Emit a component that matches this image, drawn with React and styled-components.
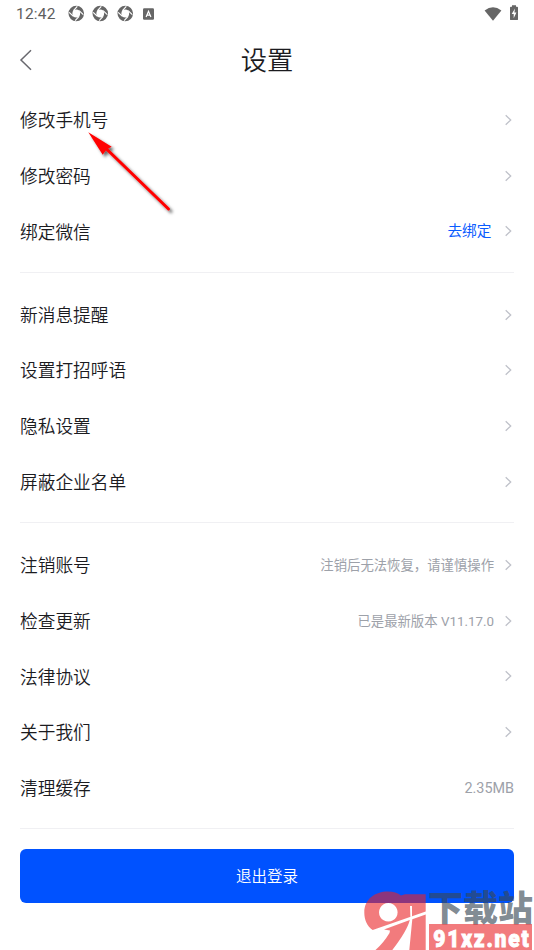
import React from "react";
import styled, { createGlobalStyle } from "styled-components";

const Global = createGlobalStyle`
  * { box-sizing: border-box; }
  html, body { margin: 0; padding: 0; background: #fff; }
  body { font-family: Roboto, "Noto Sans CJK SC", sans-serif; color: #1b1b1f; overflow: hidden; }
`;

const Screen = styled.main`
  position: relative;
  width: 534px;
  height: 950px;
  overflow: hidden;
  background: #fff;
`;

const StatusBar = styled.div`
  display: flex;
  align-items: center;
  justify-content: space-between;
  height: 27px;
  padding: 0 15px 0 16px;
  color: #5e5e5e;
`;

const StatusGroup = styled.div`
  display: flex;
  align-items: center;
  gap: ${(p) => p.$gap}px;
`;

const Clock = styled.span`
  width: 43.5px;
  font-size: 15.5px;
  font-weight: 400;
  line-height: 27px;
  letter-spacing: 0.2px;
  padding-top: 1px;
`;

const Header = styled.header`
  display: grid;
  grid-template-columns: 60px 1fr 60px;
  align-items: center;
  height: 65px;
  padding-left: 19px;
  padding-right: 19px;
`;

const BackButton = styled.button`
  display: flex;
  padding: 0;
  border: 0;
  background: none;
`;

const Title = styled.h1`
  margin: 0;
  padding-top: 2px;
  font-size: 26.3px;
  font-weight: 350;
  line-height: 40px;
  text-align: center;
`;

const Section = styled.section`
  margin: 0 20px;
  padding-bottom: 12.8px;
  margin-bottom: 13.8px;
  border-bottom: 1px solid #f0f0f3;
`;

const Row = styled.div`
  display: flex;
  align-items: center;
  height: 55.7px;
`;

const Label = styled.span`
  flex: 1;
  padding-top: 2.6px;
  font-size: 17.7px;
  font-weight: 350;
  line-height: 26px;
`;

const Hint = styled.span`
  padding-top: ${(p) => (p.$link ? 0.5 : 2)}px;
  font-size: ${(p) => (p.$link ? 14.7 : p.$last ? 14.4 : 13.36)}px;
  font-weight: 400;
  line-height: 22px;
  color: ${(p) => (p.$link ? "#0a5cff" : "#9da1a9")};
  margin-right: ${(p) => (p.$link ? 12.5 : p.$last ? 0 : 10)}px;
`;

const LogoutButton = styled.button`
  display: block;
  width: 494px;
  height: 53.5px;
  padding: 0 0 1px;
  border: 0;
  border-radius: 6px;
  background: #0052ff;
  color: #fff;
  font-family: inherit;
  font-size: 15.5px;
  font-weight: 350;
`;

const Actions = styled.div`
  padding: 6px 20px 0;
`;

const ArrowOverlay = styled.svg`
  position: absolute;
  left: 80px;
  top: 122px;
`;

const Watermark = styled.div`
  position: absolute;
  left: 363px;
  top: 889px;
  width: 171px;
  height: 61px;
  display: flex;
  gap: 2px;
`;

const WatermarkText = styled.div`
  display: flex;
  flex-direction: column;
  width: 106px;
`;

const SiteName = styled.span`
  height: 35px;
  font-family: "Noto Sans CJK SC", sans-serif;
  font-size: 35px;
  font-weight: 900;
  line-height: 34px;
  white-space: nowrap;
  color: rgba(55, 72, 84, 0.65);
`;

const SiteBanner = styled.div`
  width: 103px;
  height: 26px;
  margin-left: 1px;
  background: rgba(233, 35, 38, 0.6);
`;

const sections = [
  [{ label: "修改手机号" }, { label: "修改密码" }, { label: "绑定微信", hint: "去绑定", link: true }],
  [{ label: "新消息提醒" }, { label: "设置打招呼语" }, { label: "隐私设置" }, { label: "屏蔽企业名单" }],
  [
    { label: "注销账号", hint: "注销后无法恢复，请谨慎操作" },
    { label: "检查更新", hint: "已是最新版本 V11.17.0" },
    { label: "法律协议" },
    { label: "关于我们" },
    { label: "清理缓存", hint: "2.35MB", last: true },
  ],
];

const Chevron = () => (
  <svg width="10" height="12" viewBox="0 0 10 12" fill="none" stroke="#bfc1c9" strokeWidth="1.3">
    <path d="M1.7 1.2 6.7 6 1.7 10.8" />
  </svg>
);

const Aperture = () => (
  <svg width="16.5" height="17" viewBox="0 0 17 17">
    <circle cx="8.5" cy="8.5" r="6" fill="none" stroke="#666" strokeWidth="4" />
    <path
      d="M5.6 5.6 9.6 1.2M11.4 5.6 15.8 9.6M11.4 11.4 7.4 15.8M5.6 11.4 1.2 7.4"
      stroke="#fff"
      strokeWidth="1.2"
      fill="none"
    />
  </svg>
);

const BadgeA = () => (
  <svg width="13" height="12" viewBox="0 0 13 12">
    <rect x="2" y=".3" width="11" height="11.4" rx="1.2" fill="#666" />
    <path d="M5.1 9 7.5 3.2 9.9 9M6 7.2h3" stroke="#fff" strokeWidth="1.2" fill="none" />
  </svg>
);

const Wifi = () => (
  <svg width="18" height="14" viewBox="0 0 18 14">
    <path d="M.6 3.5Q9-3 17.4 3.5L9 13.7Z" fill="#666" />
  </svg>
);

const Battery = () => (
  <svg width="10" height="17" viewBox="0 0 10 17">
    <path d="M3 .3h4v1.4h1.1q.9 0 .9.9v11.6q0 .9-.9.9H1.9q-.9 0-.9-.9V2.6q0-.9.9-.9H3Z" fill="#666" />
    <path d="M6 3.5 2.7 9.1h2v4.1L7.4 7.6h-2Z" fill="#fff" />
  </svg>
);

const NinetyOneLogo = () => (
  <svg width="63" height="61" viewBox="0 0 63 61">
    <g fill="rgba(233,35,38,.6)">
      <path
        fillRule="evenodd"
        d="M9.7 41C4 37 1.3 31 1.3 23.5 1.3 10 12 2.5 25 2.5q8 0 13 4l4-1.2h20.7v17.2ZM25.3 14a9.3 9.3 0 1 0 .01 0ZM47 17l.4 10.7 1.6-.5V17Z"
      />
      <path d="M21 40.5 46.8 31Q44 42 29.3 61H12.5q8-7 14-17L27 41.5ZM49.3 30.2 62.7 25.5V61H46.3Z" />
    </g>
  </svg>
);

export default function App() {
  return (
    <Screen>
      <Global />
      <StatusBar>
        <StatusGroup $gap={8}>
          <Clock>12:42</Clock>
          <Aperture />
          <Aperture />
          <Aperture />
          <BadgeA />
        </StatusGroup>
        <StatusGroup $gap={7}>
          <Wifi />
          <Battery />
        </StatusGroup>
      </StatusBar>
      <Header>
        <BackButton aria-label="返回">
          <svg width="14" height="22" viewBox="0 0 14 22" fill="none" stroke="#68686e" strokeWidth="1.5">
            <path d="M12 1.3 2 11l10 9.7" />
          </svg>
        </BackButton>
        <Title>设置</Title>
      </Header>
      {sections.map((rows, i) => (
        <Section key={i}>
          {rows.map((row) => (
            <Row key={row.label}>
              <Label>{row.label}</Label>
              {row.hint && <Hint $link={row.link} $last={row.last}>{row.hint}</Hint>}
              {!row.last && <Chevron />}
            </Row>
          ))}
        </Section>
      ))}
      <Actions>
        <LogoutButton>退出登录</LogoutButton>
      </Actions>
      <ArrowOverlay width="105" height="102" viewBox="0 0 105 102">
        <defs>
          <filter id="shadow" x="-20%" y="-20%" width="150%" height="150%">
            <feDropShadow dx="2.5" dy="2.5" stdDeviation="1.8" floodColor="#000" floodOpacity=".6" />
          </filter>
        </defs>
        <g filter="url(#shadow)">
          <path d="M25 25.5 88.5 87" stroke="#f00" strokeWidth="3" strokeLinecap="round" />
          <path d="M8.3 10.3 31.7 24.7 26.5 27.5 22.7 32.8Z" fill="#f00" />
        </g>
      </ArrowOverlay>
      <Watermark>
        <NinetyOneLogo />
        <WatermarkText>
          <SiteName>下载站</SiteName>
          <SiteBanner>
            <svg width="103" height="26" viewBox="0 0 103 26">
              <text
                x="5"
                y="22.5"
                fontFamily="Roboto, sans-serif"
                fontWeight="900"
                fontSize="24.5"
                fill="#fff"
                stroke="#fff"
                strokeWidth=".9"
                textLength="111"
                lengthAdjust="spacing"
                transform="scale(.86 1)"
              >
                91xz.net
              </text>
            </svg>
          </SiteBanner>
        </WatermarkText>
      </Watermark>
    </Screen>
  );
}
